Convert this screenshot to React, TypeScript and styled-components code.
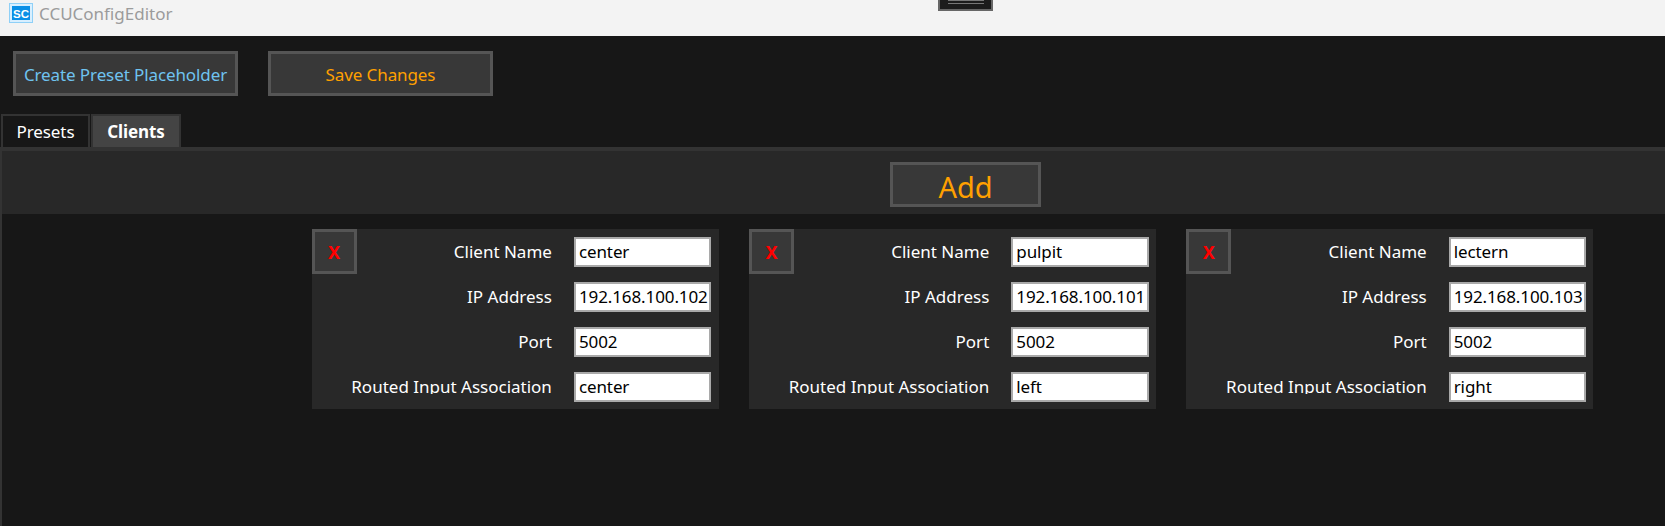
import React from 'react'
import styled, { createGlobalStyle } from 'styled-components'

const GlobalStyle = createGlobalStyle`
  html, body {
    margin: 0;
    height: 100%;
    overflow: hidden;
    background: #171717;
  }
  #root {
    height: 100%;
  }
`

const Window = styled.div`
  position: relative;
  display: flex;
  flex-direction: column;
  width: 1665px;
  height: 526px;
  overflow: hidden;
  background: #171717;
  font-family: 'Noto Sans', 'Open Sans', sans-serif;
`

const TitleBar = styled.div`
  display: flex;
  align-items: flex-start;
  gap: 6px;
  height: 36px;
  flex: none;
  padding: 3px 0 0 9px;
  box-sizing: border-box;
  background: #f3f3f3;
`

const AppTitle = styled.span`
  font-size: 17px;
  line-height: 22px;
  color: #9b9b9b;
`

const OffscreenControl = styled.div`
  position: absolute;
  left: 938px;
  top: -6px;
  width: 55px;
  height: 17px;
  box-sizing: border-box;
  border: 2px solid #666;
  background: #1c1c1c;
  &::after {
    content: '';
    position: absolute;
    left: 8px;
    right: 7px;
    top: 4px;
    height: 2px;
    border-top: 1px solid #777;
    border-bottom: 1px solid #777;
  }
`

const Toolbar = styled.div`
  display: flex;
  gap: 30px;
  padding: 15px 0 0 13px;
  flex: none;
`

const ActionButton = styled.button<{ $color: string }>`
  width: 225px;
  height: 45px;
  padding: 2px 0 0;
  box-sizing: border-box;
  border: 3px solid #555;
  background: #383838;
  color: ${({ $color }) => $color};
  font-family: inherit;
  font-size: 17px;
  letter-spacing: -0.1px;
`

const TabStrip = styled.div`
  display: flex;
  gap: 1px;
  height: 33px;
  margin-top: 18px;
  padding-left: 1px;
  flex: none;
`

const Tab = styled.div<{ $active?: boolean }>`
  width: ${({ $active }) => ($active ? '90px' : '89px')};
  height: 33px;
  box-sizing: border-box;
  border: 2px solid #333;
  border-bottom: 0;
  background: ${({ $active }) => ($active ? '#444' : '#171717')};
  color: #fff;
  font-size: 17px;
  font-weight: ${({ $active }) => ($active ? 700 : 400)};
  letter-spacing: -0.1px;
  line-height: 31px;
  text-align: center;
`

const Panel = styled.div`
  flex: 1;
  display: flex;
  flex-direction: column;
  box-sizing: border-box;
  border-top: 4px solid #333;
  border-left: 2px solid #333;
`

const PanelHeader = styled.div`
  display: flex;
  justify-content: center;
  height: 63px;
  flex: none;
  padding: 11px 0 0 261px;
  box-sizing: border-box;
  background: #282828;
  border-left: 3px solid #282828;
`

const AddButton = styled.button`
  width: 151px;
  height: 45px;
  padding: 3px 0 0;
  box-sizing: border-box;
  border: 3px solid #555;
  background: #383838;
  color: #ffa000;
  font-family: inherit;
  font-size: 29px;
  line-height: 1;
`

const CardRow = styled.div`
  display: flex;
  gap: 30.4px;
  padding: 15px 0 0 309.6px;
`

const Card = styled.div`
  width: 407px;
  height: 180px;
  background: #282828;
`

const Row = styled.div`
  display: grid;
  grid-template-columns: 240.3px 137.4px;
  column-gap: 22px;
  height: 45px;
`

const LabelCell = styled.div`
  display: flex;
  justify-content: flex-end;
`

const FieldLabel = styled.label<{ $clipped?: boolean }>`
  display: block;
  box-sizing: border-box;
  height: 30px;
  padding-top: 11px;
  overflow: ${({ $clipped }) => ($clipped ? 'hidden' : 'visible')};
  color: #fff;
  font-size: 17px;
  line-height: 24px;
  white-space: nowrap;
`

const RemoveButton = styled.button`
  width: 45px;
  height: 45px;
  margin-right: auto;
  padding: 0;
  box-sizing: border-box;
  border: 3px solid #555;
  background: #383838;
  color: #f00;
  font-family: inherit;
  font-size: 18px;
  font-weight: 700;
`

const FieldInput = styled.input`
  width: 100%;
  height: 30px;
  margin-top: 8px;
  padding: 0 0 2px 3px;
  box-sizing: border-box;
  border: 2px solid #a9a9a9;
  border-radius: 0;
  outline: none;
  background: #fff;
  color: #000;
  font-family: inherit;
  font-size: 17px;
  letter-spacing: -0.1px;
`

const AppLogo = () => (
  <svg width="24" height="20" viewBox="0 0 24 20">
    <rect x="0.5" y="0.5" width="23" height="19" fill="#d8efff" stroke="#8fd0f7" />
    <rect x="3" y="3" width="18" height="14" fill="#0a8fe6" />
    <text x="12" y="14.5" textAnchor="middle" fontFamily="Liberation Sans, sans-serif" fontSize="11.5" fontWeight="700" fill="#fff">
      SC
    </text>
  </svg>
)

type Client = {
  name: string
  ip: string
  port: string
  input: string
}

const clients: Client[] = [
  { name: 'center', ip: '192.168.100.102', port: '5002', input: 'center' },
  { name: 'pulpit', ip: '192.168.100.101', port: '5002', input: 'left' },
  { name: 'lectern', ip: '192.168.100.103', port: '5002', input: 'right' },
]

const ClientCard = ({ client }: { client: Client }) => (
  <Card>
    <Row>
      <LabelCell>
        <RemoveButton>X</RemoveButton>
        <FieldLabel>Client Name</FieldLabel>
      </LabelCell>
      <FieldInput defaultValue={client.name} />
    </Row>
    <Row>
      <LabelCell>
        <FieldLabel>IP Address</FieldLabel>
      </LabelCell>
      <FieldInput defaultValue={client.ip} />
    </Row>
    <Row>
      <LabelCell>
        <FieldLabel>Port</FieldLabel>
      </LabelCell>
      <FieldInput defaultValue={client.port} />
    </Row>
    <Row>
      <LabelCell>
        <FieldLabel $clipped>Routed Input Association</FieldLabel>
      </LabelCell>
      <FieldInput defaultValue={client.input} />
    </Row>
  </Card>
)

const App = () => (
  <Window>
    <GlobalStyle />
    <TitleBar>
      <AppLogo />
      <AppTitle>CCUConfigEditor</AppTitle>
    </TitleBar>
    <OffscreenControl />
    <Toolbar>
      <ActionButton $color="#6fc3f0">Create Preset Placeholder</ActionButton>
      <ActionButton $color="#ffa000">Save Changes</ActionButton>
    </Toolbar>
    <TabStrip>
      <Tab>Presets</Tab>
      <Tab $active>Clients</Tab>
    </TabStrip>
    <Panel>
      <PanelHeader>
        <AddButton>Add</AddButton>
      </PanelHeader>
      <CardRow>
        {clients.map((client) => (
          <ClientCard key={client.name} client={client} />
        ))}
      </CardRow>
    </Panel>
  </Window>
)

export default App
